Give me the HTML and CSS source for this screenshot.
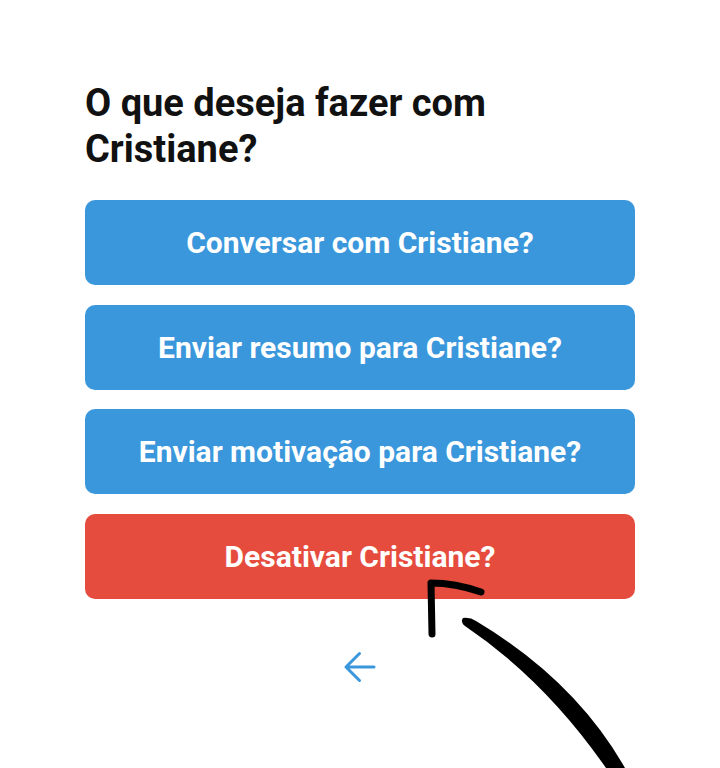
FILE: index.html
```html
<!DOCTYPE html>
<html lang="pt">
<head>
<meta charset="utf-8">
<title>Opções</title>
<link rel="stylesheet" href="styles.css">
</head>
<body>
<main class="sheet">
  <h1 class="title">O que deseja fazer com Cristiane?</h1>
  <div class="actions">
    <button class="btn btn-blue">Conversar com Cristiane?</button>
    <button class="btn btn-blue">Enviar resumo para Cristiane?</button>
    <button class="btn btn-blue">Enviar motivação para Cristiane?</button>
    <button class="btn btn-red">Desativar Cristiane?</button>
  </div>
  <button class="back" aria-label="Voltar">
    <svg width="34" height="34" viewBox="0 0 34 34" fill="none" stroke="#3a97dc" stroke-width="3" stroke-linecap="round" stroke-linejoin="round"><path d="M31 17H3M16.5 3.5L3 17l13.5 13.5"/></svg>
  </button>
  <svg class="scribble" width="720" height="768" viewBox="0 0 720 768">
    <path d="M432 634 L431 583 Q455 583 481 592" fill="none" stroke="#000" stroke-width="7" stroke-linecap="round" stroke-linejoin="round"/>
    <path d="M463 618 Q470 617 476 621 Q575 680 625 768 L606 768 Q545 680 465 626 Q460 622 463 618 Z" fill="#000"/>
  </svg>
</main>
</body>
</html>
```
FILE: styles.css
```css
html, body {
  margin: 0;
  padding: 0;
  background: #fff;
}
.sheet {
  position: relative;
  width: 720px;
  height: 768px;
  box-sizing: border-box;
  padding: 80px 85px 0 85px;
  font-family: Roboto, "Noto Sans", sans-serif;
  overflow: hidden;
}
.title {
  margin: 0;
  font-size: 38px;
  line-height: 46px;
  font-weight: 700;
  color: #111;
  width: 480px;
}
.actions {
  margin-top: 28px;
  display: flex;
  flex-direction: column;
  gap: 19.5px;
}
.btn {
  display: block;
  width: 550px;
  height: 85px;
  border: none;
  border-radius: 10px;
  color: #fff;
  font-family: Roboto, "Noto Sans", sans-serif;
  font-weight: 700;
  font-size: 30px;
  padding: 0;
}
.btn-blue { background: #3a97dc; }
.btn-red { background: #e64c3d; }
.back {
  display: block;
  margin: 51px auto 0;
  background: none;
  border: none;
  padding: 0;
  width: 34px;
  height: 34px;
}
.back svg { display: block; }
.scribble {
  position: absolute;
  left: 0;
  top: 0;
  pointer-events: none;
}
```
